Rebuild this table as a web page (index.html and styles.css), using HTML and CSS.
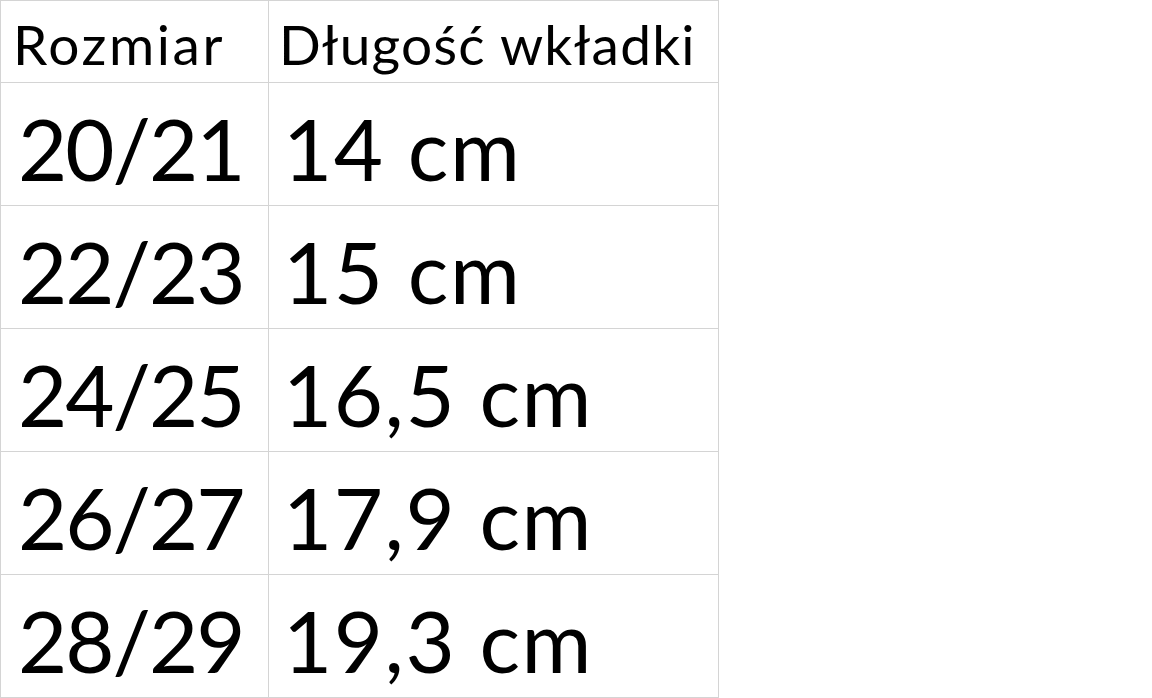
FILE: index.html
```html
<!DOCTYPE html>
<html lang="pl">
<head>
<meta charset="utf-8">
<link rel="stylesheet" href="styles.css">
</head>
<body>
<div class="sizes">
  <div class="cell head c1">Rozmiar</div><div class="cell head c2">Długość wkładki</div>
  <div class="cell row c1">20/21</div><div class="cell row c2">14 cm</div>
  <div class="cell row c1">22/23</div><div class="cell row c2">15 cm</div>
  <div class="cell row c1">24/25</div><div class="cell row c2">16,5 cm</div>
  <div class="cell row c1">26/27</div><div class="cell row c2">17,9 cm</div>
  <div class="cell row c1">28/29</div><div class="cell row c2">19,3 cm</div>
</div>
</body>
</html>
```
FILE: styles.css
```css
html, body {
  margin: 0;
  padding: 0;
  background: #ffffff;
}
.sizes {
  display: grid;
  grid-template-columns: 268px 450px;
  grid-template-rows: 82px repeat(5, 123px);
  width: max-content;
  border-top: 1px solid #d4d4d4;
  border-left: 1px solid #d4d4d4;
  font-family: Lato, "Liberation Sans", sans-serif;
  color: #000;
}
.cell {
  box-sizing: border-box;
  border-right: 1px solid #d4d4d4;
  border-bottom: 1px solid #d4d4d4;
  display: flex;
  align-items: flex-end;
  white-space: nowrap;
  line-height: 1;
}
.head {
  font-size: 55px;
  padding-bottom: 10px;
}
.head.c1 { padding-left: 12px; letter-spacing: 2.6px; }
.head.c2 { padding-left: 10px; letter-spacing: 1.2px; }
.row {
  font-size: 85px;
  padding-bottom: 14px;
}
.row.c1 { padding-left: 17px; letter-spacing: -2px; }
.row.c2 { padding-left: 14px; letter-spacing: 1.5px; }
```
